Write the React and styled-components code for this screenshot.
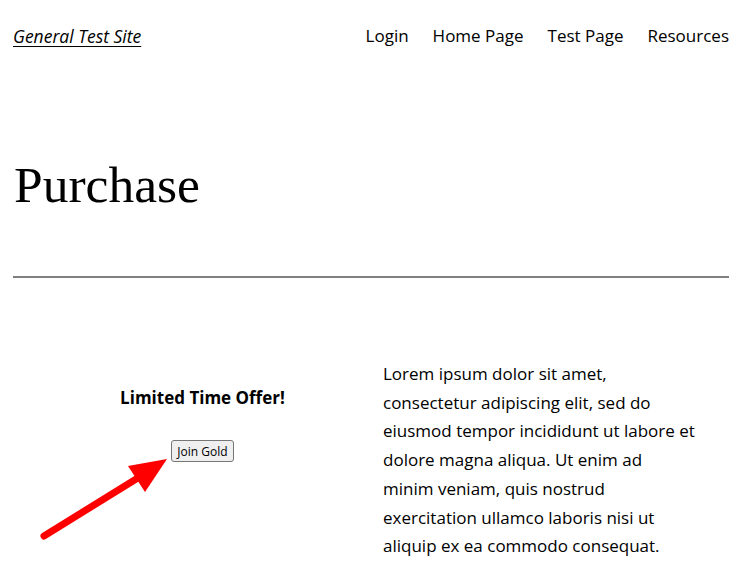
import React from 'react';
import styled, {createGlobalStyle} from 'styled-components';

const Global = createGlobalStyle`
    html, body {
        margin: 0;
        padding: 0;
        background: #FFFFFF;
        color: #000000;
        font-family: "Open Sans", "Noto Sans", sans-serif;
    }
`;

const Page = styled.div`
    position: relative;
    width: 743px;
    height: 565px;
    overflow: hidden;
    padding: 0 14px 0 13px;
    box-sizing: border-box;
`;

const Header = styled.header`
    display: flex;
    justify-content: space-between;
    align-items: center;
    height: 71px;
`;

const SiteTitle = styled.a`
    font-size: 17.5px;
    font-style: italic;
    color: black;
    text-decoration: underline;
    text-underline-offset: 3px;
`;

const Nav = styled.nav`
    display: flex;
    gap: 24px;
`;

const NavLink = styled.a`
    font-size: 17px;
    color: black;
    text-decoration: none;
`;

const Title = styled.h1`
    margin: 84px 0 0 1px;
    font-family: "Liberation Serif", serif;
    font-weight: 400;
    font-size: 51.5px;
    line-height: 60px;
`;

const Divider = styled.hr`
    margin: 61px 0 0 0;
    border: none;
    height: 2px;
    background: #808080;
`;

const Columns = styled.div`
    display: grid;
    grid-template-columns: 370px 313px;
    margin-top: 82px;
`;

const OfferCol = styled.div`
    display: flex;
    flex-direction: column;
    align-items: center;
    padding: 26px 0 0 9px;
`;

const OfferHeading = styled.h3`
    margin: 0;
    font-size: 17px;
    font-weight: 700;
    line-height: 24px;
`;

const JoinButton = styled.button`
    margin-top: 30px;
    font-family: "Open Sans", sans-serif;
    font-size: 12px;
    padding: 1px 5px;
    height: 22px;
    background: #EFEFEF;
    border: 1px solid #767676;
    border-radius: 3px;
    color: black;
`;

const Para = styled.p`
    margin: 0;
    font-size: 17px;
    line-height: 28.7px;
`;

const Arrow = styled.svg`
    position: absolute;
    left: 36px;
    top: 450px;
`;

export default function App() {
    return (
        <Page>
            <Global />
            <Header>
                <SiteTitle href="#">General Test Site</SiteTitle>
                <Nav>
                    <NavLink href="#">Login</NavLink>
                    <NavLink href="#">Home Page</NavLink>
                    <NavLink href="#">Test Page</NavLink>
                    <NavLink href="#">Resources</NavLink>
                </Nav>
            </Header>
            <Title>Purchase</Title>
            <Divider />
            <Columns>
                <OfferCol>
                    <OfferHeading>Limited Time Offer!</OfferHeading>
                    <JoinButton>Join Gold</JoinButton>
                </OfferCol>
                <Para>
                    Lorem ipsum dolor sit amet, consectetur adipiscing elit, sed do eiusmod tempor incididunt ut labore et dolore magna aliqua. Ut enim ad minim veniam, quis nostrud exercitation ullamco laboris nisi ut aliquip ex ea commodo consequat.
                </Para>
            </Columns>
            <Arrow width="140" height="100" viewBox="0 0 140 100">
                <line x1="8" y1="86" x2="105" y2="26" stroke="#FF0000" strokeWidth="7" strokeLinecap="round" />
                <polygon points="131,9 92,16 109,42" fill="#FF0000" />
            </Arrow>
        </Page>
    );
}
